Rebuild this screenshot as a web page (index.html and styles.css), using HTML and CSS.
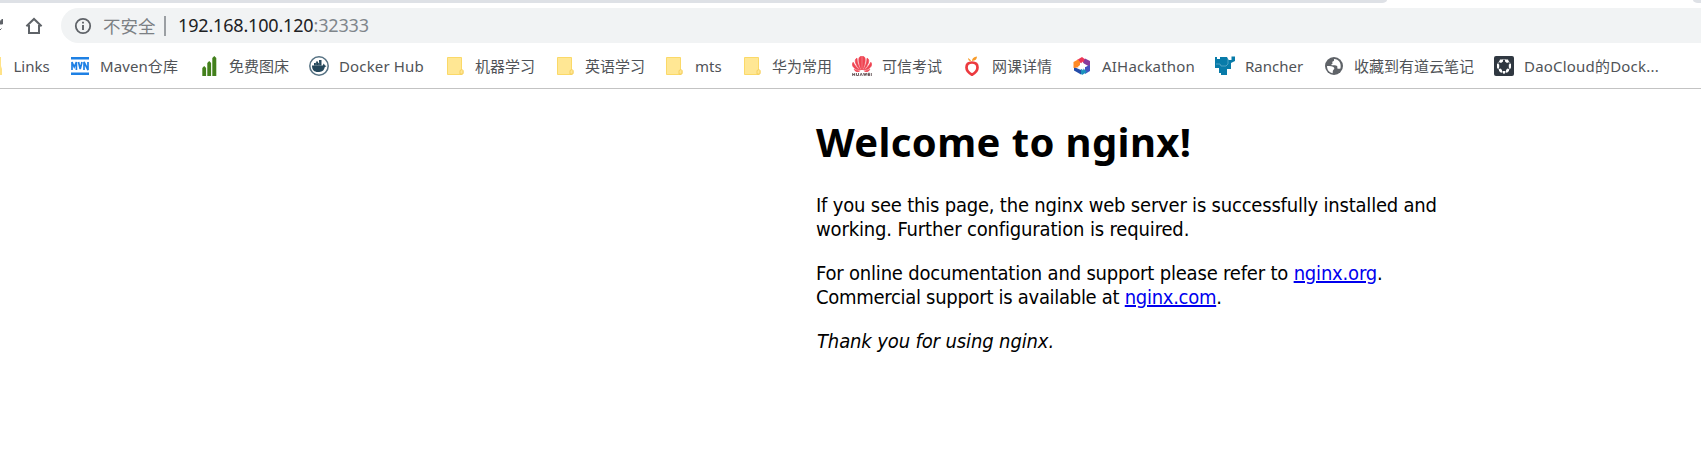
FILE: index.html
```html
<!DOCTYPE html>
<html lang="zh-CN">
<head>
<meta charset="utf-8">
<title>Welcome to nginx!</title>
<link rel="stylesheet" href="styles.css">
</head>
<body>
<header class="browser">
  <div class="tabs"><span class="tab-left"></span><span class="tab-right"></span></div>
  <div class="toolbar">
    <svg class="reload" viewBox="0 0 4 20"><path d="M0 5.500L2.500 3V8H0zM0 14L1.500 12.500" fill="#5f6368" stroke="#5f6368" stroke-width="1"/></svg>
    <svg class="home" viewBox="0 0 18 18"><path d="M1.400 9.200L9 2l7.600 7.200M4 8v8h10V8" fill="none" stroke="#5f6368" stroke-width="2"/></svg>
    <div class="omnibox">
      <svg class="info" viewBox="0 0 18 18"><circle cx="9" cy="9" r="7.200" fill="none" stroke="#5f6368" stroke-width="1.800"/><path d="M9 8v5M9 4.800v1.800" stroke="#5f6368" stroke-width="1.900"/></svg>
      <span class="insecure">不安全</span><span class="divider"></span>
      <span class="url">192.168.100.120<span class="port">:32333</span></span>
    </div>
  </div>
  <nav class="bookmarks">
    <a class="bm first"><svg class="sliver" viewBox="0 0 2 20"><path d="M0 1h1v9l1 3v6H0z" fill="#ffe287"/></svg><span class="t-links">Links</span></a>
    <a class="bm"><svg viewBox="0 0 20 20"><path d="M1 1h18v2.500H1zM1 16.500h18V19H1z" fill="#1e80e4"/><path d="M2 14V6l2.200 5L6.400 6v8M8.500 6l1.700 7L12 6M14 14V6l4 8V6" fill="none" stroke="#1e80e4" stroke-width="1.700"/></svg><span class="t-maven">Maven仓库</span></a>
    <a class="bm"><svg viewBox="0 0 20 20"><path d="M3.300 12l1.900-2 1.900 2v8H3.300zM8.300 7l1.900-2 1.900 2v13H8.300zM13.300 2l2-2 2 2v18h-4z" fill="#43801c"/></svg><span>免费图床</span></a>
    <a class="bm"><svg viewBox="0 0 20 20"><circle cx="10" cy="10" r="9.200" fill="#fff" stroke="#557182" stroke-width="1.500"/><path d="M3 9.500h2V7h2V5.500h2V7h1V4h2.500v5.500h1.200l1-2 1.300 2 1.500.5-1.800 1.200C15 15 12.500 16 9 16c-3.800 0-6-2-6-6.500z" fill="#24475b"/><path d="M3 9.500h10M7 6v3M10 6v3" stroke="#8ba0ab" stroke-width=".5"/></svg><span class="t-docker">Docker Hub</span></a>
    <a class="bm"><svg viewBox="0 0 20 20"><use href="#folder"/></svg><span>机器学习</span></a>
    <a class="bm"><svg viewBox="0 0 20 20"><use href="#folder"/></svg><span>英语学习</span></a>
    <a class="bm"><svg viewBox="0 0 20 20"><use href="#folder"/></svg><span class="t-mts">mts</span></a>
    <a class="bm"><svg viewBox="0 0 20 20"><use href="#folder"/></svg><span>华为常用</span></a>
    <a class="bm"><svg viewBox="0 0 20 20"><g fill="#ef4351" stroke="#ef4351" stroke-width=".7"><path d="M9.600 14C7 9 6 3 7.500 1.200Q8.500 0 9.600.3zM10.400 14C13 9 14 3 12.500 1.200Q11.500 0 10.400.3zM8.700 14C5 11 2.500 6 3.500 3.500Q4 2.500 5 2.200C5 6 6.500 10 8.700 14zM11.300 14C15 11 17.500 6 16.500 3.500Q16 2.500 15 2.200C15 6 13.500 10 11.300 14zM8 14C4 14 0 11 .5 8Q.5 7 1.200 6.300C3 10 5 12 8 14zM12 14c4 0 8-3 7.500-6q0-1-.7-1.700C17 10 15 12 12 14zM7.500 15.200c-2 1-4.200.4-5.300-1.800zM12.500 15.200c2 1 4.200.4 5.300-1.800z"/></g><path d="M.7 17v3m2-3v3m-2-1.500h2M4.500 17v2.500h2V17M8 20l1.200-2.800 1.200 2.800M11.500 17l.8 2.600.8-2.400.8 2.400.8-2.600M18 17.300h-2v2.300h2M16 18.500h2M19.300 17v3" fill="none" stroke="#4e3b3d" stroke-width=".8"/></svg><span>可信考试</span></a>
    <a class="bm"><svg viewBox="0 0 20 20"><path d="M10 6.500c-3.600 0-5.500 2-5.500 5 0 3.500 2 5.300 5.500 7.200 3.500-1.900 5.500-3.700 5.500-7.200 0-3-1.900-5-5.500-5z" fill="none" stroke="#ec3a3f" stroke-width="2.700"/><path d="M9.500 5.500Q8.500 3 6 2q0 3 3.500 3.500zM10 5q0-4 5-4.500 0 4-5 4.500z" fill="#f89c2b"/></svg><span>网课详情</span></a>
    <a class="bm"><svg viewBox="0 0 20 20"><path d="M10 1l4 3-4 4-5-4z" fill="#ed3655"/><path d="M13 2.500l5 2.500v6l-7-4z" fill="#873c9d"/><path d="M18 9v6l-5 3 0-7z" fill="#4353c0"/><path d="M15 16l-5 3-3-4 4-3z" fill="#1b91bd"/><path d="M9 18.500l-7-4V11l7 3z" fill="#234caa"/><path d="M6 3.500L1.500 6v6L8 11V6z" fill="#ff8a26"/><path d="M10.500 5.500l1.200 3 3.300 1.500-3 1.300-1 3.200-2-2.800-3.500-.5L8 9z" fill="#fff"/></svg><span class="t-ai">AIHackathon</span></a>
    <a class="bm"><svg viewBox="0 0 20 20"><path d="M0 1h2v2h3V1h7l1.500 3h3V.5H20V5l-4 2v6h-4v6H6v-2H4v-5H0z" fill="#087ba9"/><path d="M1 8h4l1 2h5l2-2V3" fill="none" stroke="#6cb3ce" stroke-width=".7"/></svg><span class="t-rancher">Rancher</span></a>
    <a class="bm"><svg viewBox="0 0 20 20"><circle cx="10" cy="10" r="9" fill="#5f6368"/><path d="M3 10c3 0 6 0 7 1.500s-.5 2-1 3 .2 1.500-.5 2.700C5 16.500 3 13.500 3 10zM10 3v1.500c0 1-1.500.7-1.700 1.500S9 7.500 8.200 8 6.500 9 8 9.200s4-.2 5 .8-.2 2 .5 2.500 1.500.2 3 0C17.500 7 15 3.200 10 3z" fill="#fff"/></svg><span>收藏到有道云笔记</span></a>
    <a class="bm"><svg viewBox="0 0 20 20"><rect width="20" height="20" rx="2" fill="#303841"/><path d="M10 3.200L15.800 6.500V13L10 16.800 4.200 13V6.500z" fill="none" stroke="#aab0b5" stroke-width=".8"/><path d="M6 3.500h3v2L7 7 5 6zM11 3.500h3L15 6l-2 1-2-1.500zM3 7.500l2.200 1v3L4 13l-1-1.500zM17 7.500l-2.200 1v3L16 13l1-1.500zM5 13l1.500-.5L8 14v2.500l-1 .3L5 15zM15 13l-1.500-.5L12 14v2.500l1 .3 2-1.800zM8.800 15h2.400v2L10 18l-1.200-1z" fill="#fff"/></svg><span class="t-dao">DaoCloud的Dock...</span></a>
  </nav>
</header>
<main class="page">
  <h1>Welcome to nginx!</h1>
  <p><span class="l1">If you see this page, the nginx web server is successfully installed and</span><br><span class="l2">working. Further configuration is required.</span></p>
  <p><span class="l3">For online documentation and support please refer to <a href="#">nginx.org</a>.</span><br><span class="l4">Commercial support is available at <a href="#">nginx.com</a>.</span></p>
  <p><em class="l5">Thank you for using nginx.</em></p>
</main>
<svg width="0" height="0" class="defs"><defs><g id="folder"><path d="M2.500 1.500h14v12l1.500 1V17l-1 1.500H2.500z" fill="#ffe794" stroke="#fbd968"/><path d="M15 18v-3.500l2-1 1 1V18z" fill="#ffe794" stroke="#f3ca55" stroke-width=".8"/></g></defs></svg>
</body>
</html>
```
FILE: styles.css
```css
body { margin: 0; background: #fff; overflow: hidden; font-family: "Noto Sans", "Noto Sans CJK SC", sans-serif; }
.browser { height: 88px; border-bottom: 1px solid #c3c3c3; }
.tabs { height: 3px; display: flex; justify-content: space-between; }
.tab-left { width: 1387px; background: #dee1e6; border-bottom-right-radius: 5px 3px; }
.tab-right { width: 8px; background: #dee1e6; border-bottom-left-radius: 5px 3px; }
.toolbar { display: flex; height: 35px; padding-top: 5px; align-items: center; }
.reload { width: 4px; height: 20px; }
.home { width: 18px; height: 18px; margin: 1px 18px 0 21px; }
.omnibox { flex: 1; height: 35px; display: flex; align-items: center; border-radius: 18px 0 0 18px; background: #f1f3f4; font-size: 18px; line-height: 35px; }
.info { width: 18px; height: 18px; margin-left: 13px; }
.insecure { width: 53px; margin-left: 11px; font-size: 17.5px; color: #7c8084; font-family: "Noto Sans CJK SC", sans-serif; white-space: nowrap; }
.divider { width: 2px; height: 20px; margin-left: 8px; background: #9b9fa3; }
.url { margin-left: 12px; color: #202124; letter-spacing: -0.17px; }
.port { color: #80868b; }
.bookmarks { display: grid; height: 45px; padding-top: 1px; box-sizing: border-box; grid-template-columns: 70px 129px 110px 136px 110px 109px 78px 110px 110px 110px 143px 109px 170px 180px; }
.bm { display: flex; align-items: center; gap: 10px; height: 44px; font-size: 15px; line-height: 22px; color: #505357; white-space: nowrap; }
.bm svg { width: 20px; height: 20px; flex: none; }
.bm .sliver { width: 2px; }
.first { gap: 11.5px; }
.t-maven { letter-spacing: 0.1px; }
.t-docker { letter-spacing: 0.15px; }
.t-mts { padding-left: 1px; }
.t-ai { letter-spacing: 0.2px; }
.t-dao { letter-spacing: 0.2px; }
.page { width: 700px; margin: 29px 0 0 816px; font-size: 20px; line-height: 24px; color: #000; white-space: nowrap; }
h1 { margin: 0; font-family: "Noto Sans", sans-serif; font-size: 40px; line-height: 48px; letter-spacing: 0.38px; }
p { margin: 20px 0 0; font-family: "DejaVu Sans", sans-serif; font-stretch: condensed; }
h1 + p { margin-top: 27px; }
.l1 { letter-spacing: -0.2px; }
.l2 { letter-spacing: -0.15px; }
.l3 { letter-spacing: -0.19px; }
.l4 { letter-spacing: -0.29px; }
.l5 { letter-spacing: -0.12px; padding-left: 1px; }
a[href] { color: #0000ee; text-decoration-thickness: 2px; text-underline-offset: 1px; }
.defs { display: block; }
```
